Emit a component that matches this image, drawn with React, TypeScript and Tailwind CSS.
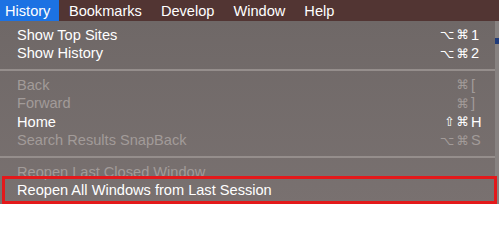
import React from 'react'

type Item =
  | { kind: 'sep' }
  | { kind: 'item'; label: string; mods?: string; keyName?: string; disabled?: boolean }

const items: Item[] = [
  { kind: 'item', label: 'Show Top Sites', mods: '⌥⌘', keyName: '1' },
  { kind: 'item', label: 'Show History', mods: '⌥⌘', keyName: '2' },
  { kind: 'sep' },
  { kind: 'item', label: 'Back', mods: '⌘', keyName: '[', disabled: true },
  { kind: 'item', label: 'Forward', mods: '⌘', keyName: ']', disabled: true },
  { kind: 'item', label: 'Home', mods: '⇧⌘', keyName: 'H' },
  { kind: 'item', label: 'Search Results SnapBack', mods: '⌥⌘', keyName: 'S', disabled: true },
  { kind: 'sep' },
  { kind: 'item', label: 'Reopen Last Closed Window', disabled: true },
  { kind: 'item', label: 'Reopen All Windows from Last Session' },
]

const menus = ['History', 'Bookmarks', 'Develop', 'Window', 'Help']

export default function App() {
  return (
    <div className="relative w-[499px] h-[204px] overflow-hidden bg-[#7a7371] font-['Liberation_Sans',Arial,sans-serif] text-[14.6px] leading-none">
      {/* menu bar */}
      <div className="flex h-[21px] bg-[#523533] text-white">
        {menus.map((m, i) => (
          <div
            key={m}
            className={`flex items-center h-full pt-[1px] ${
              i === 0 ? 'pl-[5px] pr-[9px] bg-[#1c72e3]' : 'px-[9.5px]'
            }`}
          >
            {m}
          </div>
        ))}
      </div>

      <div className="flex h-[183px]">
        {/* dropdown */}
        <div className="w-[495px] h-full pt-[5px] bg-gradient-to-b from-[#6f6867] to-[#797170]">
          {items.map((it, i) =>
            it.kind === 'sep' ? (
              <div key={i} className="h-[13px] pt-[6px]">
                <div className="h-[2px] w-full bg-[#958e8c]" />
              </div>
            ) : (
              <div
                key={i}
                className={`flex items-center h-[18.5px] pl-[17px] pr-[14px] ${
                  it.disabled ? 'text-[#a29b99]' : 'text-white'
                }`}
              >
                <span className="flex-1">{it.label}</span>
                {it.keyName && (
                  <span className="flex items-center">
                    <span className="flex gap-[2px] font-['DejaVu_Sans',sans-serif] text-[12.5px]">
                      {it.mods?.split('').map((g, j) => (
                        <span key={j}>{g}</span>
                      ))}
                    </span>
                    <span className="w-[12px] pl-[2px]">{it.keyName}</span>
                  </span>
                )}
              </div>
            )
          )}
        </div>

        {/* window behind */}
        <div className="flex-1 bg-[#878281]">
          <div className="mt-[17px] h-[6px] bg-[#203b7a]" />
        </div>
      </div>

      {/* red highlight annotation */}
      <div className="absolute left-[2px] right-[2px] top-[176px] bottom-0 border-[3px] border-[#e3191b]" />
    </div>
  )
}
